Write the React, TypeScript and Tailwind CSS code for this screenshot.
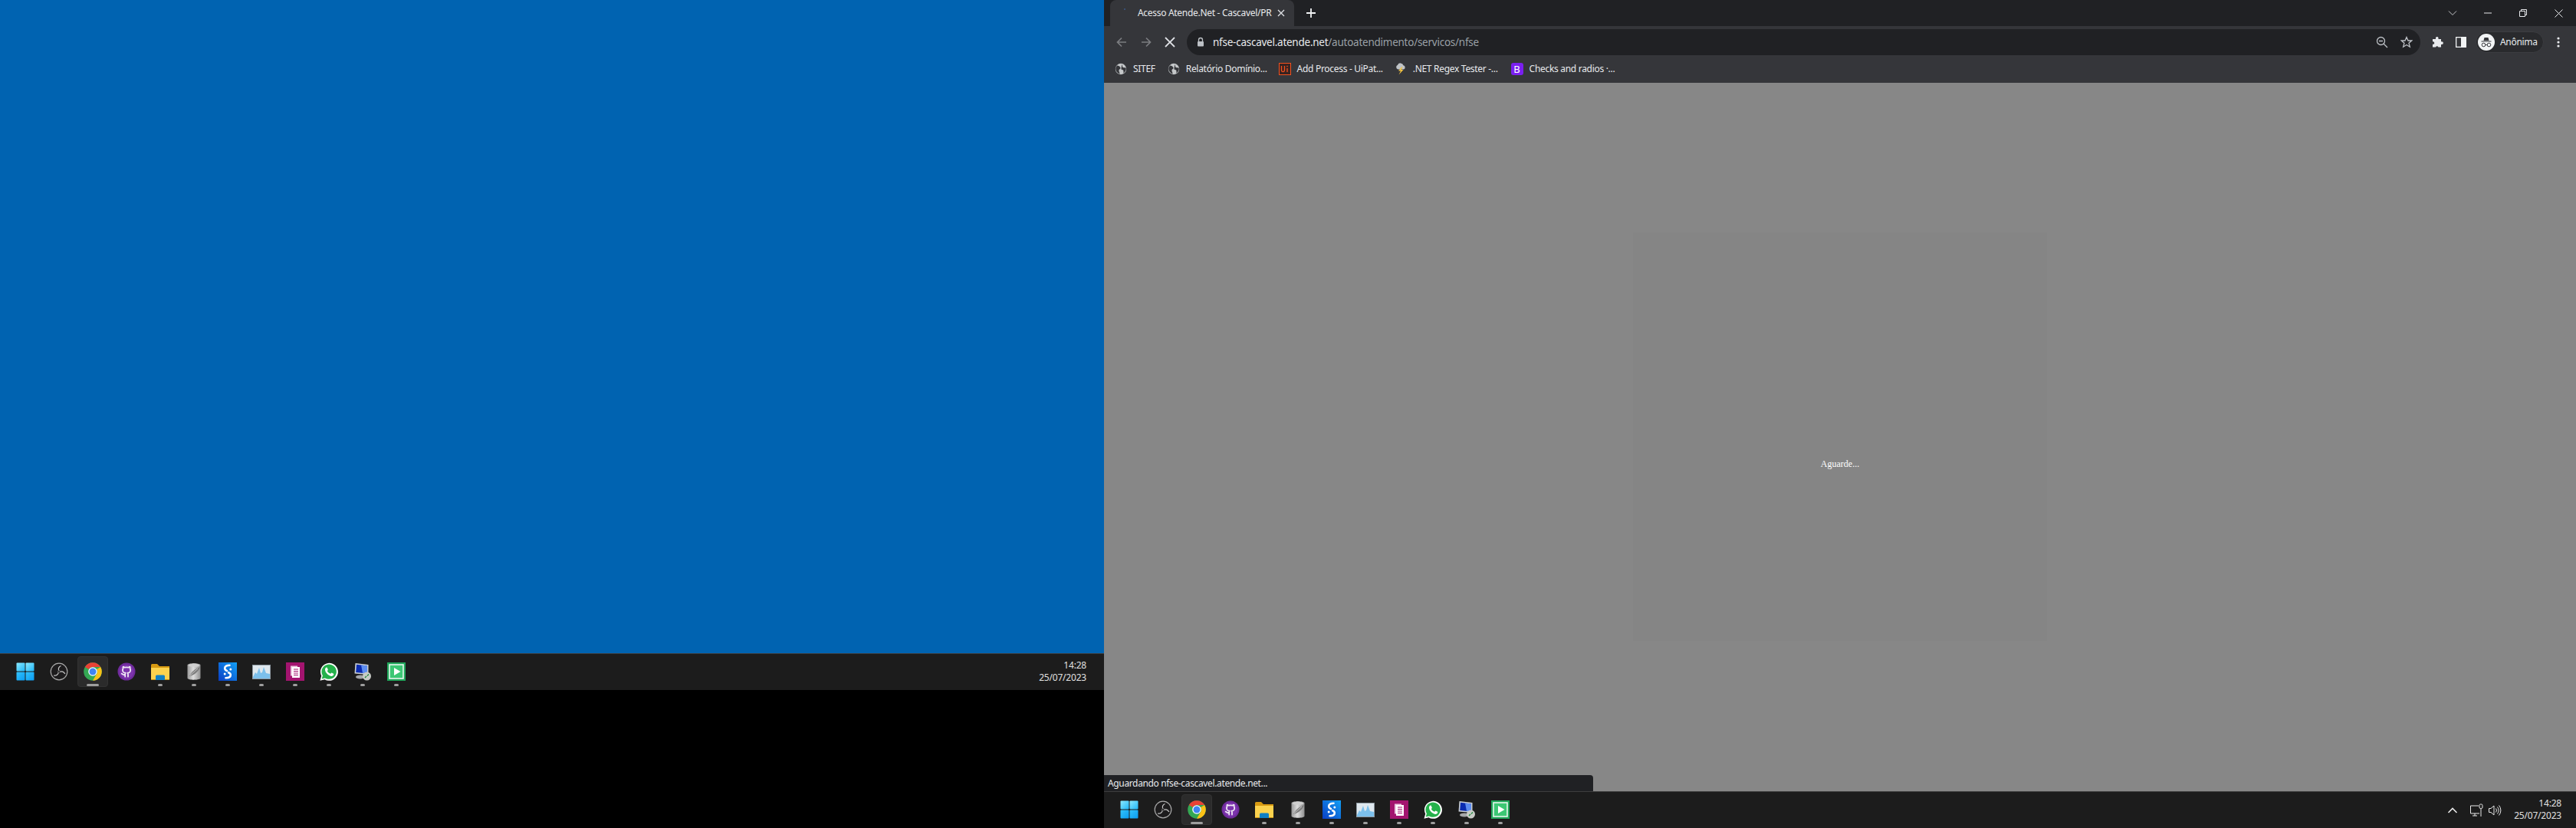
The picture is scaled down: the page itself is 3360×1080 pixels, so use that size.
import React from "react";

const font = { fontFamily: '"Noto Sans", "Open Sans", sans-serif' };

function WinIcon() {
  return (
    <svg width="24" height="24" viewBox="0 0 24 24">
      <defs>
        <linearGradient id="w1" x1="0" y1="0" x2="1" y2="1">
          <stop offset="0" stopColor="#8ceaff" />
          <stop offset="1" stopColor="#1fb6f8" />
        </linearGradient>
        <linearGradient id="w2" x1="0" y1="0" x2="1" y2="1">
          <stop offset="0" stopColor="#33c3fb" />
          <stop offset="1" stopColor="#0a9bf2" />
        </linearGradient>
      </defs>
      <rect x="0.5" y="0.5" width="11" height="11" rx="1" fill="url(#w1)" />
      <rect x="12.5" y="0.5" width="11" height="11" rx="1" fill="url(#w1)" />
      <rect x="0.5" y="12.5" width="11" height="11" rx="1" fill="url(#w2)" />
      <rect x="12.5" y="12.5" width="11" height="11" rx="1" fill="url(#w2)" />
    </svg>
  );
}

function ObsIcon() {
  return (
    <svg width="24" height="24" viewBox="0 0 24 24">
      <circle cx="12" cy="12" r="10.8" fill="#1d1c1d" stroke="#a9a9a9" strokeWidth="1.2" />
      <path d="M12 11.5C10.5 8.5 11.5 5.500 14.500 4.500" fill="none" stroke="#c9c9c9" strokeWidth="1.200" />
      <path d="M12.500 12.500C15.500 11 18.500 12 19.800 15" fill="none" stroke="#c9c9c9" strokeWidth="1.200" />
      <path d="M11.500 12.500C11 15.500 8.500 17.800 5.200 17" fill="none" stroke="#c9c9c9" strokeWidth="1.200" />
      <circle cx="12" cy="12" r="1.500" fill="#1d1c1d" stroke="#8a8a8a" strokeWidth="0.6" />
    </svg>
  );
}

function ChromeIcon() {
  return (
    <svg width="24" height="24" viewBox="0 0 24 24">
      <circle cx="12" cy="12" r="11.8" fill="#34a853" />
      <path d="M12 .2A11.8 11.8 0 0 1 22.2 6.100H12A5.900 5.900 0 0 0 6.900 9L1.800 6.100A11.800 11.800 0 0 1 12 .2Z" fill="#e94235" />
      <path d="M22.200 6.100A11.800 11.800 0 0 1 12 23.800L17.100 15A5.900 5.900 0 0 0 17.100 9Z" fill="#fbc116" />
      <circle cx="12" cy="12" r="5.800" fill="#fff" />
      <circle cx="12" cy="12" r="4.500" fill="#3f84f2" />
    </svg>
  );
}

function GithubIcon() {
  return (
    <svg width="24" height="24" viewBox="0 0 24 24">
      <circle cx="12" cy="12" r="11.500" fill="#6f2b9c" />
      <circle cx="12" cy="12" r="9.300" fill="#7d35ad" />
      <g transform="translate(4.400 4.400) scale(0.64)" fill="none" stroke="#f0eaf5" strokeWidth="2.800" strokeLinecap="round" strokeLinejoin="round">
        <path d="M15 22v-4a4.800 4.800 0 0 0-1-3.500c3 0 6-2 6-5.500.08-1.250-.27-2.480-1-3.500.28-1.150.28-2.350 0-3.500 0 0-1 0-3 1.500-2.640-.5-5.360-.5-8 0C6 2 5 2 5 2c-.3 1.150-.3 2.350 0 3.500A5.403 5.403 0 0 0 4 9c0 3.500 3 5.500 6 5.500-.39.490-.68 1.050-.85 1.650-.17.600-.22 1.230-.15 1.850v4" />
        <path d="M9 18c-4.510 2-5-2-7-2" />
      </g>
    </svg>
  );
}

function FolderIcon() {
  return (
    <svg width="24" height="24" viewBox="0 0 24 24">
      <path d="M0 3.500A1.500 1.500 0 0 1 1.500 2H8L11 5H24V9H0Z" fill="#d79a12" />
      <path d="M0 7H24V22H0Z" fill="#fbd24e" />
      <path d="M0 22H24V23H0Z" fill="#c98f12" />
      <path d="M6 23V18A1.500 1.500 0 0 1 7.500 16.500H16.500A1.500 1.500 0 0 1 18 18V23Z" fill="#0f7fc4" />
    </svg>
  );
}

function DbIcon() {
  return (
    <svg width="24" height="24" viewBox="0 0 24 24">
      <defs>
        <linearGradient id="db" x1="0" x2="1">
          <stop offset="0" stopColor="#9a9a9a" />
          <stop offset="0.45" stopColor="#dddddd" />
          <stop offset="1" stopColor="#8f8f8f" />
        </linearGradient>
      </defs>
      <path d="M3.500 3.500C3.500 0.500 20.500 0.500 20.500 3.500V20.500C20.500 23.500 3.500 23.500 3.500 20.500Z" fill="url(#db)" />
      <ellipse cx="12" cy="3.800" rx="7.500" ry="2" fill="#cfcfcf" />
      <path d="M6 18C9 12 14 8 20 6C18 12 13 16 6 18Z" fill="#7c7c7c" />
      <path d="M7 17L17 8" stroke="#e2e2e2" strokeWidth="0.700" />
    </svg>
  );
}

function SIcon() {
  return (
    <svg width="24" height="24" viewBox="0 0 24 24">
      <defs>
        <linearGradient id="si" x1="0" y1="1" x2="1" y2="0">
          <stop offset="0" stopColor="#0a3ec4" />
          <stop offset="1" stopColor="#12a0f5" />
        </linearGradient>
      </defs>
      <rect width="24" height="24" fill="url(#si)" />
      <path d="M14.500 3.800C11 3.800 8.200 5 8.200 7.800C8.200 9.800 10 10.500 11 11" fill="none" stroke="#fff" strokeWidth="2.600" strokeLinecap="round" />
      <path d="M9.500 20.200C13 20.200 15.800 19 15.800 16.200C15.800 14.500 14.500 13.800 13 13.200" fill="none" stroke="#fff" strokeWidth="2.600" strokeLinecap="round" />
      <circle cx="15.800" cy="9" r="1.500" fill="#fff" />
      <circle cx="8.200" cy="15" r="1.500" fill="#fff" />
    </svg>
  );
}

function MonitorIcon() {
  return (
    <svg width="24" height="24" viewBox="0 0 24 24">
      <rect x="0.500" y="3.500" width="23" height="18" fill="#dfe8ee" stroke="#8f9aa2" />
      <path d="M1 19L4 13L6 15L9 7L11 14L13 13L15 6L18 14L23 15V21H1Z" fill="#7cc0ec" />
    </svg>
  );
}

function DocIcon() {
  return (
    <svg width="24" height="24" viewBox="0 0 24 24">
      <rect width="24" height="24" fill="#a3146f" />
      <rect x="6" y="4.500" width="9" height="13" fill="#e9c6dd" />
      <rect x="8" y="6" width="10" height="14" fill="#fff" />
      <path d="M10 9H16M10 11.500H16M10 14H16M10 16.500H16" stroke="#a3146f" strokeWidth="1" />
    </svg>
  );
}

function WhatsIcon() {
  return (
    <svg width="24" height="24" viewBox="0 0 24 24">
      <path d="M0.500 23.800L2.200 17.600A11.500 11.500 0 1 1 6.500 22.200Z" fill="#fff" />
      <path d="M2.700 21.500L3.900 17.300A9.700 9.700 0 1 1 7 20.400Z" fill="#25b14b" />
      <path
        d="M8.800 6.400C8.300 6.400 7 7.500 7 9.400C7 11.500 8.500 13.500 9 14.100C10 15.500 12 17.500 15 18C16.500 18.200 18 17 18.200 16C18.400 15 18.300 14.800 18 14.700L15.700 13.500C15.400 13.400 15.100 13.600 14.500 14.400C14.200 14.800 14 14.800 13.500 14.600C11.800 13.800 10.800 12.800 10 11.500C9.700 11 10.300 10.700 10.700 10C10.900 9.700 10.800 9.500 10.700 9.300L9.800 7C9.500 6.400 9.200 6.400 8.800 6.400Z"
        fill="#fff"
      />
    </svg>
  );
}

function RdpIcon() {
  return (
    <svg width="24" height="24" viewBox="0 0 24 24">
      <path d="M2.500 1L19.500 3V16L1.500 14.500Z" fill="#c9ced4" />
      <path d="M4 2.800L18 4.500V14.500L3.200 13Z" fill="#0a2bb0" />
      <path d="M10 3.500L18 4.500V14.500L12 14Z" fill="#5d8df0" />
      <ellipse cx="9" cy="19" rx="6" ry="2.500" fill="#a5a7a9" />
      <circle cx="17.500" cy="18" r="5.500" fill="#c8cbc6" />
      <path d="M15 20L17 18M18 17.500L20 15.500" stroke="#1f8a3c" strokeWidth="1.300" />
    </svg>
  );
}

function GreenPlay() {
  return (
    <svg width="24" height="24" viewBox="0 0 24 24">
      <rect width="24" height="24" fill="#20a65a" />
      <rect x="2.200" y="2.200" width="19.600" height="19.600" fill="#e7f7ee" />
      <rect x="3.800" y="3.800" width="16.400" height="16.400" fill="#3cc774" />
      <path d="M9 7L17.500 12L9 17Z" fill="#fff" />
    </svg>
  );
}

const apps = [
  { key: "win", icon: <WinIcon /> },
  { key: "obs", icon: <ObsIcon /> },
  { key: "chrome", icon: <ChromeIcon />, active: true },
  { key: "gh", icon: <GithubIcon /> },
  { key: "folder", icon: <FolderIcon />, dot: true },
  { key: "db", icon: <DbIcon />, dot: true },
  { key: "s", icon: <SIcon />, dot: true },
  { key: "mon", icon: <MonitorIcon />, dot: true },
  { key: "doc", icon: <DocIcon />, dot: true },
  { key: "wa", icon: <WhatsIcon />, dot: true },
  { key: "rdp", icon: <RdpIcon />, dot: true },
  { key: "play", icon: <GreenPlay />, dot: true },
];

function TrayIcons() {
  return (
    <div className="flex items-center">
      <svg width="14" height="10" viewBox="0 0 14 10" className="mr-[15px]">
        <path d="M1.500 8L7 2.500L12.500 8" fill="none" stroke="#e8e8e8" strokeWidth="1.600" />
      </svg>
      <svg width="18" height="18" viewBox="0 0 18 18" className="mr-[6px]">
        <path d="M12 3H1.500V13H13M4 16H10M7 13V16" fill="none" stroke="#e8e8e8" strokeWidth="1" />
        <rect x="13" y="1" width="4" height="5.500" rx="1.500" fill="none" stroke="#e8e8e8" />
        <path d="M15 6.500V17" stroke="#e8e8e8" />
      </svg>
      <svg width="18" height="18" viewBox="0 0 18 18">
        <path d="M1.500 6.500H4L8 3V15L4 11.500H1.500Z" fill="none" stroke="#e8e8e8" />
        <path d="M10.500 6.500A4 4 0 0 1 10.500 11.500M12.500 4.500A7 7 0 0 1 12.500 13.500M14.500 2.500A10 10 0 0 1 14.500 15.500" fill="none" stroke="#e8e8e8" />
      </svg>
    </div>
  );
}

function Taskbar({ tray, pr }: { tray?: boolean; pr: string }) {
  return (
    <div className={`h-[48px] shrink-0 bg-[#1c1c1c] border-t border-[#3d3d3d] flex items-center pl-[11px] ${pr}`} style={font}>
      {apps.map((a) => (
        <div key={a.key} className="relative w-[44px] h-[47px] flex items-center justify-center pb-[1px]">
          {a.active && <div className="absolute left-[2px] top-[3px] w-[40px] h-[40px] rounded-[4px] bg-[#2b2b2b] border border-[#333333]" />}
          <div className="relative flex">{a.icon}</div>
          {a.active && <div className="absolute left-[14px] top-[39px] w-[16px] h-[3px] rounded-full bg-[#9e9e9e]" />}
          {a.dot && <div className="absolute left-[19px] top-[39px] w-[6px] h-[3px] rounded-full bg-[#9e9e9e]" />}
        </div>
      ))}
      <div className="flex-1" />
      {tray && <TrayIcons />}
      <div className={`text-right text-[12px] leading-[16px] text-[#e0e0e0] tracking-[-0.2px] pb-[1px] ${tray ? "ml-[16px]" : ""}`}>
        <div>14:28</div>
        <div>25/07/2023</div>
      </div>
    </div>
  );
}

function Globe() {
  return (
    <svg width="16" height="16" viewBox="0 0 16 16">
      <circle cx="8" cy="8" r="7.200" fill="#c4c7c9" />
      <path d="M3 3.500C5 3.500 7 4.500 7.500 6.500C7.800 8 6 8 5.500 9.500C5 11 6.500 11.500 6.500 14.500C3 13 0.500 10 1.500 6ZM10 2C10 4 9.500 5 11 6C12.500 6.500 14 6 14.800 7C15 10 13.500 12 11.500 13.500C11 12 12 11 11 9.500C9.500 8.500 8.500 9.500 8.500 8C8.500 6 9 3 10 2Z" fill="#35363a" />
    </svg>
  );
}

function UiIcon() {
  return (
    <svg width="16" height="16" viewBox="0 0 16 16">
      <rect x="0.500" y="0.500" width="15" height="15" fill="#3a2320" stroke="#f4511e" />
      <path d="M3.500 4V10C3.500 12 7.500 12 7.500 10V4M11 7V12" fill="none" stroke="#f4511e" strokeWidth="1.300" />
      <rect x="10.300" y="3.800" width="1.400" height="1.400" fill="#f4511e" />
    </svg>
  );
}

function StormIcon() {
  return (
    <svg width="16" height="16" viewBox="0 0 16 16">
      <path d="M4.500 8.500A3 3 0 0 1 4 2.800A4 4 0 0 1 11.500 3.200A2.800 2.800 0 0 1 12 8.500Z" fill="#bfc3c7" />
      <path d="M9 5.500L5 10.500H8L5.500 15.500L11.500 9H8.500L10.500 5.500Z" fill="#f5c542" />
    </svg>
  );
}

function BootIcon() {
  return (
    <div className="w-[16px] h-[16px] rounded-[3px] bg-[#7a1ff0] text-white text-[13px] leading-[16px] text-center">B</div>
  );
}

const bookmarks = [
  { icon: <Globe />, text: "SITEF", ml: "ml-[14px]" },
  { icon: <Globe />, text: "Relatório Domínio...", ml: "ml-[16px]" },
  { icon: <UiIcon />, text: "Add Process - UiPat...", ml: "ml-[15px]" },
  { icon: <StormIcon />, text: ".NET Regex Tester -...", ml: "ml-[15px]" },
  { icon: <BootIcon />, text: "Checks and radios ·...", ml: "ml-[17px]" },
];

function Browser() {
  return (
    <div className="shrink-0" style={font}>
      <div className="h-[34px] bg-[#202124] flex items-end pl-[8px] relative">
        <div className="relative w-[240px] h-[34px] bg-[#35363a] rounded-t-[8px] flex items-center pl-[36px] pr-[12px] text-[12px] text-[#e8eaed]">
          <div className="absolute left-[18px] top-[11px] w-[2px] h-[2px] rounded-full bg-[#3b5a8a]" />
          <span className="flex-1 whitespace-nowrap tracking-[-0.3px]">Acesso Atende.Net - Cascavel/PR</span>
          <svg width="10" height="10" viewBox="0 0 10 10">
            <path d="M1 1L9 9M9 1L1 9" stroke="#dfe1e5" strokeWidth="1.300" />
          </svg>
        </div>
        <div className="self-center ml-[15px] flex">
          <svg width="14" height="14" viewBox="0 0 14 14">
            <path d="M7 1V13M1 7H13" stroke="#f1f3f4" strokeWidth="1.800" />
          </svg>
        </div>
        <div className="flex-1" />
        <div className="self-center flex items-center pr-[17px]">
          <svg width="12" height="8" viewBox="0 0 12 8" className="mr-[35px]">
            <path d="M1 1.500L6 6.500L11 1.500" fill="none" stroke="#c5c7ca" />
          </svg>
          <svg width="10" height="2" viewBox="0 0 10 2" className="mr-[36px]">
            <path d="M0 1H10" stroke="#e8eaed" />
          </svg>
          <svg width="10" height="10" viewBox="0 0 10 10" className="mr-[36px]">
            <path d="M0.500 2.500H7.500V9.500H0.500ZM2.500 2.500V0.500H9.500V7.500H7.500" fill="none" stroke="#e8eaed" />
          </svg>
          <svg width="11" height="11" viewBox="0 0 11 11">
            <path d="M0.500 0.500L10.500 10.500M10.500 0.500L0.500 10.500" stroke="#e8eaed" />
          </svg>
        </div>
      </div>
      <div className="h-[42px] bg-[#35363a] flex items-start pt-[4px] pl-[15px]">
        <div className="flex items-center h-[34px]">
          <svg width="16" height="16" viewBox="0 0 16 16" className="mr-[16px]">
            <path d="M14 8H2.500M8 2.500L2.500 8L8 13.500" fill="none" stroke="#7b7d80" strokeWidth="1.700" />
          </svg>
          <svg width="16" height="16" viewBox="0 0 16 16" className="mr-[16px]">
            <path d="M2 8H13.500M8 2.500L13.500 8L8 13.500" fill="none" stroke="#7b7d80" strokeWidth="1.700" />
          </svg>
          <svg width="14" height="14" viewBox="0 0 14 14">
            <path d="M1 1L13 13M13 1L1 13" stroke="#dfe1e5" strokeWidth="1.800" />
          </svg>
        </div>
        <div className="ml-[15px] w-[1609px] h-[34px] rounded-full bg-[#202124] flex items-center pl-[11px] pr-[10px]">
          <svg width="14" height="14" viewBox="0 0 14 14" className="mr-[9px]">
            <path d="M4.500 6V4A2.500 2.500 0 0 1 9.500 4V6" fill="none" stroke="#bdc1c6" strokeWidth="1.300" />
            <rect x="3" y="6" width="8" height="6.500" rx="1" fill="#bdc1c6" />
          </svg>
          <span className="text-[13.5px] text-[#e8eaed] tracking-[-0.25px]">nfse-cascavel.atende.net</span>
          <span className="text-[13.5px] text-[#9aa0a6] tracking-[-0.25px]">/autoatendimento/servicos/nfse</span>
          <div className="flex-1" />
          <svg width="16" height="16" viewBox="0 0 16 16" className="mr-[16px]">
            <circle cx="6.500" cy="6.500" r="5" fill="none" stroke="#bdc1c6" strokeWidth="1.300" />
            <path d="M4 6.500H9M10.200 10.200L15 15" stroke="#bdc1c6" strokeWidth="1.300" />
          </svg>
          <svg width="16" height="16" viewBox="0 0 16 16">
            <path d="M8 1.500L10 6H14.800L11 9.200L12.300 14.200L8 11.500L3.700 14.200L5 9.200L1.200 6H6Z" fill="none" stroke="#bdc1c6" strokeWidth="1.300" />
          </svg>
        </div>
        <div className="flex items-center h-[34px] ml-[14px]">
          <svg width="16" height="16" viewBox="0 0 16 16" className="mr-[16px]">
            <path d="M6 2.500A1.800 1.800 0 0 1 9.500 2.500V4H13V7.200H14A1.900 1.900 0 0 1 14 11H13V14.500H9.500A1.900 1.900 0 0 0 6 14.500H2V10.800H3A1.900 1.900 0 0 0 3 7.200H2V4H6Z" fill="#e8eaed" />
          </svg>
          <svg width="14" height="14" viewBox="0 0 14 14" className="mr-[12px]">
            <rect x="7" y="0" width="7" height="14" fill="#f1f3f4" />
            <rect x="0" y="0" width="14" height="1.300" fill="#f1f3f4" />
            <rect x="0" y="12.700" width="14" height="1.300" fill="#f1f3f4" />
            <rect x="0" y="0" width="1.300" height="14" fill="#f1f3f4" />
          </svg>
          <div className="w-[89px] h-[28px] rounded-full bg-[#292a2d] border border-[#3c3d41] flex items-center pl-[2px]">
            <svg width="22" height="22" viewBox="0 0 22 22" className="shrink-0">
              <circle cx="11" cy="11" r="11" fill="#f1f3f4" />
              <path d="M7.500 9L8.500 5H13.500L14.500 9ZM4.500 9.500H17.500V10.500H4.500Z" fill="#35363a" />
              <circle cx="7.500" cy="14.500" r="2.300" fill="none" stroke="#35363a" />
              <circle cx="14.500" cy="14.500" r="2.300" fill="none" stroke="#35363a" />
              <path d="M9.800 14.500H12.200" stroke="#35363a" />
            </svg>
            <span className="ml-[7px] text-[12px] text-[#e8eaed] whitespace-nowrap tracking-[-0.3px]">Anônima</span>
          </div>
          <svg width="4" height="14" viewBox="0 0 4 14" className="ml-[17px]">
            <circle cx="2" cy="2" r="1.600" fill="#e8eaed" />
            <circle cx="2" cy="7" r="1.600" fill="#e8eaed" />
            <circle cx="2" cy="12" r="1.600" fill="#e8eaed" />
          </svg>
        </div>
      </div>
      <div className="h-[32px] bg-[#35363a] flex items-center pb-[4px]">
        {bookmarks.map((b) => (
          <div key={b.text} className={`flex items-center ${b.ml}`}>
            {b.icon}
            <span className="ml-[8px] text-[12px] text-[#e8eaed] whitespace-nowrap tracking-[-0.3px]">{b.text}</span>
          </div>
        ))}
      </div>
    </div>
  );
}

export default function App() {
  return (
    <div className="flex w-[3360px] h-[1080px] overflow-hidden bg-black">
      <div className="w-[1440px] h-[1080px] flex flex-col shrink-0">
        <div className="h-[852px] bg-[#0063b1]" />
        <Taskbar pr="pr-[23px]" />
        <div className="flex-1 bg-black" />
      </div>
      <div className="flex-1 h-[1080px] flex flex-col relative">
        <Browser />
        <div className="flex-1 bg-[#878787] flex justify-center pt-[195px]">
          <div className="w-[540px] h-[533px] bg-[#858585] flex justify-center pt-[295px]">
            <span className="text-[12px] leading-[15px] text-white" style={{ fontFamily: '"Liberation Serif", serif' }}>
              Aguarde...
            </span>
          </div>
        </div>
        <Taskbar tray pr="pr-[19px]" />
        <div className="absolute left-0 bottom-[48px] w-[638px] h-[21px] bg-[#202124] rounded-tr-[4px] flex items-center pl-[5px] text-[12px] text-[#e8eaed] tracking-[-0.36px]" style={font}>
          Aguardando nfse-cascavel.atende.net...
        </div>
      </div>
    </div>
  );
}
